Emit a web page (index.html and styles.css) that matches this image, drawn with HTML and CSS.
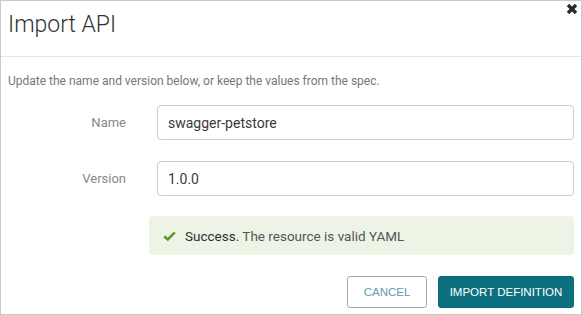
FILE: index.html
```html
<!DOCTYPE html>
<html>
<head>
<meta charset="utf-8">
<link rel="stylesheet" href="styles.css">
</head>
<body>
<div class="dialog">
  <button class="close" aria-label="Close">
    <svg width="12" height="12" viewBox="0 0 12 12"><path d="M2 2 L10 10 M10 2 L2 10" stroke="#2b2b2b" stroke-width="3.4" stroke-linecap="butt"/></svg>
  </button>
  <div class="header">
    <h1 class="title">Import API</h1>
  </div>
  <div class="body">
    <p class="desc">Update the name and version below, or keep the values from the spec.</p>
    <div class="form">
      <label class="label">Name</label>
      <div class="input">swagger-petstore</div>
      <label class="label">Version</label>
      <div class="input">1.0.0</div>
    </div>
    <div class="alert">
      <svg class="check" width="13" height="10" viewBox="0 0 13 10"><path d="M1.2 5.2 L4.8 8.4 L11.8 1.4" fill="none" stroke="#5a9a2b" stroke-width="2.6"/></svg>
      <span class="alert-text"><span class="strong">Success.</span> The resource is valid YAML</span>
    </div>
    <div class="actions">
      <button class="btn btn-cancel">CANCEL</button>
      <button class="btn btn-primary">IMPORT DEFINITION</button>
    </div>
  </div>
</div>
</body>
</html>
```
FILE: styles.css
```css
* { box-sizing: border-box; }
html, body { margin: 0; padding: 0; background: #fff; }
body { font-family: Roboto, "Liberation Sans", sans-serif; }
.dialog {
  position: relative;
  width: 582px;
  height: 315px;
  border: 1px solid #c7cbcc;
  background: #fff;
}
.close {
  position: absolute;
  top: 2px;
  right: 3px;
  width: 12px;
  height: 12px;
  padding: 0;
  border: 0;
  background: none;
  display: flex;
}
.header {
  padding: 12px 8px 20px 7px;
  border-bottom: 1px solid #e5e5e5;
}
.title {
  margin: 0;
  font-size: 23px;
  line-height: 23px;
  font-weight: 300;
  color: #333;
}
.body {
  padding: 16px 7px 0 7px;
}
.desc {
  margin: 0;
  font-size: 12px;
  line-height: 16px;
  color: #777;
}
.form {
  margin-top: 16px;
  display: grid;
  grid-template-columns: 118px 1fr;
  column-gap: 31px;
  row-gap: 21px;
  align-items: center;
}
.label {
  text-align: right;
  font-size: 13px;
  color: #888;
}
.input {
  height: 35px;
  border: 1px solid #ccc;
  border-radius: 4px;
  padding: 0 10px;
  display: flex;
  align-items: center;
  font-size: 14px;
  color: #3a3a3a;
}
.alert {
  margin: 20px 0 0 141px;
  height: 39px;
  background: #eef4e5;
  border-radius: 4px;
  padding: 0 14px;
  display: flex;
  align-items: center;
  gap: 9px;
  font-size: 13.5px;
  color: #555;
}
.alert .strong { color: #2e2e2e; }
.check { flex: none; }
.actions {
  margin-top: 21px;
  display: flex;
  justify-content: flex-end;
  gap: 11px;
}
.btn {
  height: 32px;
  border-radius: 3px;
  font-family: "Liberation Sans", Arial, sans-serif;
  font-size: 11.5px;
  padding: 0;
}
.btn-cancel {
  width: 80px;
  border: 1px solid #a0a9b0;
  background: #fff;
  color: #5e9bb3;
}
.btn-primary {
  width: 136px;
  border: 1px solid #0a6a7a;
  background: #0d7080;
  color: #fff;
}
```
